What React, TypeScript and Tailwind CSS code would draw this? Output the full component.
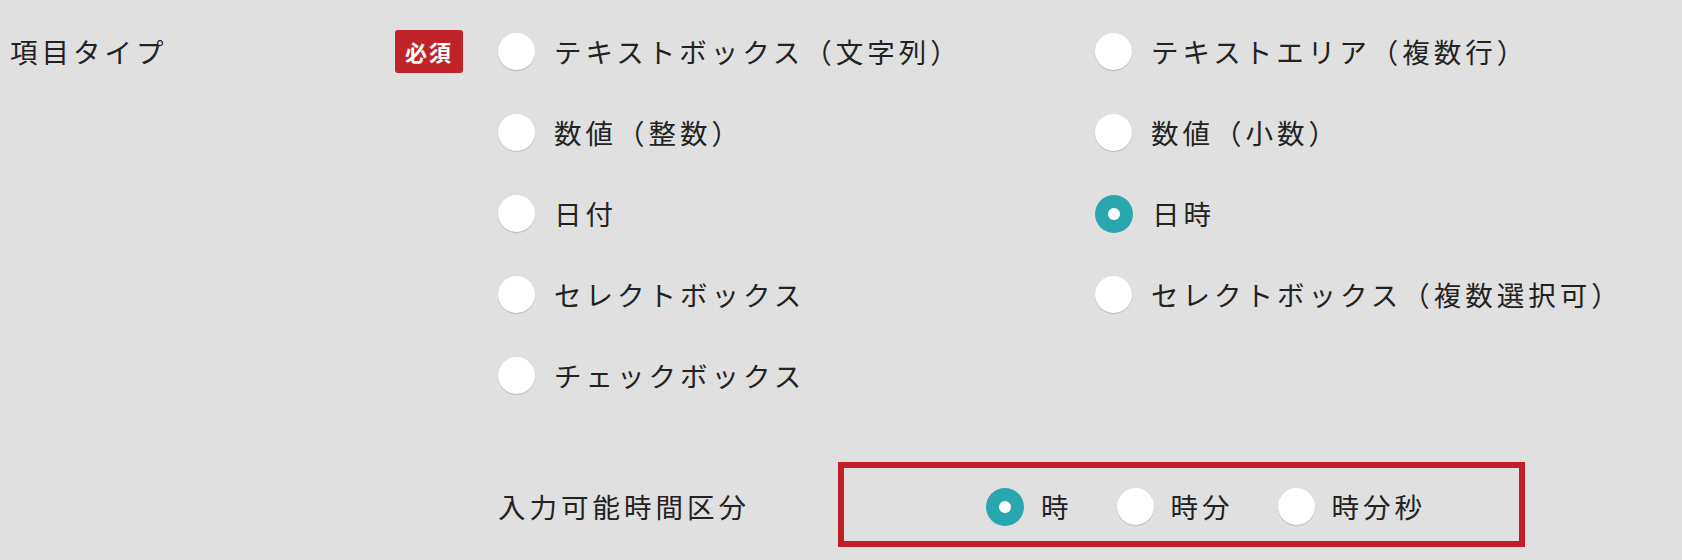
const leftOptions = [
  "テキストボックス（文字列）",
  "数値（整数）",
  "日付",
  "セレクトボックス",
  "チェックボックス",
];

const rightOptions = [
  "テキストエリア（複数行）",
  "数値（小数）",
  "日時",
  "セレクトボックス（複数選択可）",
  "",
];

const timeUnits = ["時", "時分", "時分秒"];

function Radio({ checked }: { checked?: boolean }) {
  if (checked) {
    return (
      <span className="flex h-[38px] w-[38px] shrink-0 items-center justify-center rounded-full bg-[#29a7af]">
        <span className="h-[12px] w-[12px] rounded-full bg-white" />
      </span>
    );
  }
  return (
    <span className="h-[37px] w-[37px] shrink-0 rounded-full bg-white shadow-[0_1px_1px_rgba(0,0,0,0.18)]" />
  );
}

export default function App() {
  const itemType = "日時";
  const timeUnit = "時";

  return (
    <div
      className="min-h-screen bg-[#e0e0e0] text-[#222222] text-[27.5px] font-normal tracking-[4px]"
      style={{ fontFamily: '"Noto Sans CJK JP", "Noto Sans", sans-serif' }}
    >
      <div className="flex pl-[10px] pt-[11px]">
        {/* label + badge */}
        <div className="flex h-[81px] w-[385px] items-center">項目タイプ</div>
        <div className="flex h-[81px] items-center">
          <span className="flex h-[43px] w-[68px] items-center justify-center rounded-[3px] bg-[#c1232b] text-[22px] font-bold tracking-[2px] text-white">
            必須
          </span>
        </div>

        <div className="ml-[35px] flex flex-col">
          <div className="grid grid-cols-[597px_auto]">
            {leftOptions.map((left, i) => (
              <div key={i} className="contents">
                <label className="flex h-[81px] items-center">
                  <Radio checked={left === itemType} />
                  <span className="ml-[19px]">{left}</span>
                </label>
                {rightOptions[i] ? (
                  <label className="flex h-[81px] items-center">
                    <Radio checked={rightOptions[i] === itemType} />
                    <span className="ml-[19px]">{rightOptions[i]}</span>
                  </label>
                ) : (
                  <div className="h-[81px]" />
                )}
              </div>
            ))}
          </div>

          {/* time unit row */}
          <div className="mt-[46px] flex items-center">
            <div className="w-[340px] pt-[4px]">入力可能時間区分</div>
            <div className="flex h-[85px] w-[687px] items-center border-[6px] border-[#c01f27] pl-[142px] pt-[4px]">
              {timeUnits.map((u) => (
                <label key={u} className="mr-[44px] flex items-center">
                  <Radio checked={u === timeUnit} />
                  <span className="ml-[17px]">{u}</span>
                </label>
              ))}
            </div>
          </div>
        </div>
      </div>
    </div>
  );
}
